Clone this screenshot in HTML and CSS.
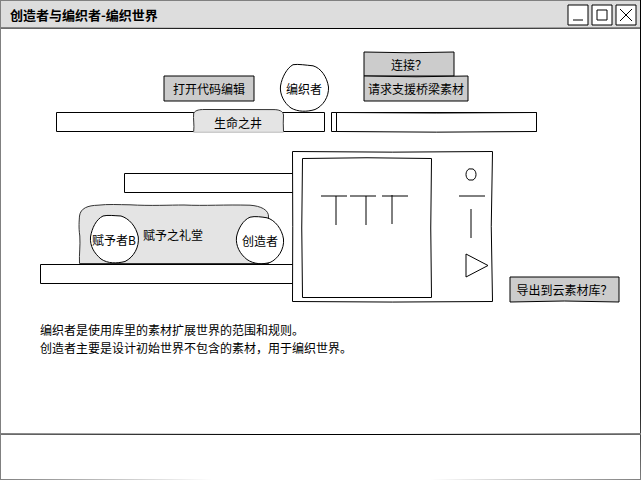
FILE: index.html
```html
<!DOCTYPE html>
<html lang="zh-CN">
<head>
<meta charset="utf-8">
<title>创造者与编织者-编织世界</title>
<link rel="stylesheet" href="styles.css">
</head>
<body>
<div class="window">
  <header class="titlebar">
    <h1 class="title">创造者与编织者-编织世界</h1>
    <div class="controls">
      <button class="control" type="button" aria-label="最小化">
        <svg viewBox="0 0 22 22"><path d="M1 1H21V21H1Z"/><path d="M6 16H16"/></svg>
      </button>
      <button class="control" type="button" aria-label="最大化">
        <svg viewBox="0 0 22 22"><path d="M1 1H21V21H1Z"/><path d="M6 6H16V16H6Z"/></svg>
      </button>
      <button class="control" type="button" aria-label="关闭">
        <svg viewBox="0 0 22 22"><path d="M1 1H21V21H1Z"/><path d="M5 5L17 17M17 5L5 17"/></svg>
      </button>
    </div>
  </header>

  <main class="stage">
    <svg class="scene" viewBox="0 29 641 404" aria-hidden="true">
      <!-- platforms -->
      <path class="paper" d="M56.500 112.500H324.500V131.500H56.500Z"/>
      <path class="paper" d="M331.500 112.500H536.500V131.500H331.500Z"/>
      <path class="paper" d="M336.500 112.500Q436 113.500 536.500 112.500V131.500Q436 132.800 336.500 131.500Z"/>
      <path class="paper" d="M124.500 173.500H300V192.500H124.500Z"/>
      <path class="paper" d="M40.500 264.500H300V283.500H40.500Z"/>
      <!-- well and hall -->
      <path class="base" d="M193.500 132H283.500"/>
      <path class="stone" d="M193.700 131.500C194.500 125 193 119 193.700 113C196 109.800 200 109.600 204 109.500L273 109.600C279 109.500 283 111 283.500 115Q283 123 283.500 131.500"/>
      <path class="stone" d="M79.500 263.500C79 254 80.500 246 79.800 236C78.500 227 79.200 221 79.500 216C80.500 208 88 205.500 98 205.200C108 204 118 204.700 130 204.800C150 206 170 205 184 205C205 206 225 204.500 250 205.200C261 206 269 210 268.500 217V263.500Z"/>
      <!-- characters -->
      <path class="paper" d="M293 64.700C298 63.800 306 65.200 313 65.800C321 68 327 77 328.500 87C329 97 323 106 315 109.500C307 112 298 112 291 108C284 103 279.500 94 280.500 86C282 77 287 68 293 64.700Z"/>
      <path class="paper" d="M103 216C108 214.800 114 215.700 121 216C129 218.500 136 226 138.300 237C139.300 247 134 257 125 261.500C117 263.500 108 263.800 101 259C94 253 89.800 246 90.500 237C92 228 96 219.500 103 216Z"/>
      <path class="paper" d="M250 217.200C255 215.900 262 217 267 217.800C275 220 282 229 283.500 239C284.500 249 278 259 270 262.500C262 264.500 254 264.300 247 259.500C240 254 235.500 246 236.500 237C238 229 243 220 250 217.200Z"/>
      <!-- action panels -->
      <path class="panel" d="M164 76H254V101H164Z"/>
      <path class="panel" d="M364 52Q409 53.500 454 52V76H364Z"/>
      <path class="panel" d="M364 76Q416 77.500 468 76V101H364Z"/>
      <path class="panel" d="M510 277H619V302Q564 300 510 302Z"/>
      <!-- device -->
      <path class="paper" d="M292.500 151.500Q392 152.800 492.500 151.500Q490 226 492.500 301.500Q392 302.600 292.500 301.500Q293 226 292.500 151.500Z"/>
      <path class="paper" d="M302.500 158.500Q367 157 431.500 158.500Q430 228 431.500 297.500H302.500Q301 228 302.500 158.500Z"/>
      <path class="mark" d="M321 196H347M336 196V225M350 196H376M366 196V225M382 196H408M392 195V224"/>
      <path class="mark" d="M459 196H485M471 209V238"/>
      <path class="paper" d="M469 168.900L473 169C477 171 477 178 473 180L469 180C465 178 465 171 469 168.900Z"/>
      <path class="paper" d="M466 254L488 265.500L466 277Z"/>
    </svg>

    <button class="action edit" type="button">打开代码编辑</button>
    <button class="action connect" type="button">连接？</button>
    <button class="action request" type="button">请求支援桥梁素材</button>
    <button class="action export" type="button">导出到云素材库？</button>

    <span class="label weaver">编织者</span>
    <span class="label well">生命之井</span>
    <span class="label giver">赋予者B</span>
    <span class="label hall">赋予之礼堂</span>
    <span class="label creator">创造者</span>

    <p class="note">编织者是使用库里的素材扩展世界的范围和规则。<br>创造者主要是设计初始世界不包含的素材，用于编织世界。</p>
  </main>

  <footer class="statusbar"></footer>
</div>
</body>
</html>
```
FILE: styles.css
```css
* {
  box-sizing: border-box;
}

body {
  margin: 0;
  background: #fff;
  color: #000;
  font: 12px/18px "Noto Sans CJK SC", sans-serif;
}

.window {
  display: flex;
  flex-direction: column;
  min-height: 100vh;
  border-left: 1px solid #808080;
  background:
    linear-gradient(#000, #222 85%, #808080) right / 1px 100% no-repeat,
    linear-gradient(90deg, #808080, #fff 33%, #fff 67%, #808080) bottom / 100% 1px no-repeat,
    #fff;
}

.titlebar,
.statusbar {
  --fade: linear-gradient(90deg, #808080, transparent 40%, transparent 60%, #808080);
  --line: linear-gradient(90deg, #707070, #000 40%, #000 60%, #707070);
}

.titlebar {
  display: flex;
  align-items: center;
  justify-content: space-between;
  height: 29px;
  margin-right: 1px;
  padding: 1px 3px 2px 9px;
  border-top: 1px solid #808080;
  background:
    var(--line) bottom / 100% 1px no-repeat,
    var(--fade) 0 calc(100% - 1px) / 100% 1px no-repeat,
    #ddd;
}

.title {
  margin: 0;
  font-size: 13px;
  line-height: 18px;
  font-weight: 700;
}

.controls {
  display: flex;
  gap: 2px;
}

.control {
  width: 22px;
  height: 22px;
  padding: 0;
  border: 0;
  background: none;
}

.control svg {
  display: block;
  fill: #fff;
  stroke: #000;
}

.stage {
  position: relative;
  flex: 1;
  margin-left: -1px;
}

.scene {
  position: absolute;
  top: 0;
  left: 0;
  width: 641px;
  height: 404px;
}

.scene path {
  stroke: #000;
  stroke-width: 1;
}

.scene .paper {
  fill: #fff;
}

.scene .stone {
  fill: #e4e4e4;
  stroke: #333;
}

.scene .panel {
  fill: #ccc;
}

.scene .mark {
  fill: none;
}

.scene .base {
  stroke: #ccc;
  stroke-width: 2;
}

.action {
  position: absolute;
  height: 26px;
  padding: 0;
  border: 0;
  background: none;
  color: inherit;
  font: inherit;
}

.edit {
  top: 47px;
  left: 163px;
  width: 92px;
}

.connect {
  top: 23px;
  left: 363px;
  width: 92px;
}

.request {
  top: 47px;
  left: 363px;
  width: 106px;
}

.export {
  top: 248px;
  left: 509px;
  width: 111px;
}

.label {
  position: absolute;
  white-space: nowrap;
}

.weaver {
  top: 51px;
  left: 286px;
}

.well {
  top: 85px;
  left: 214px;
}

.giver {
  top: 202px;
  left: 92px;
}

.hall {
  top: 197px;
  left: 143px;
}

.creator {
  top: 203px;
  left: 242px;
}

.note {
  position: absolute;
  top: 292px;
  left: 40px;
  margin: 0;
}

.statusbar {
  height: 47px;
  background:
    var(--line) 0 1px / 100% 1px no-repeat,
    var(--fade) 0 0 / 100% 1px no-repeat;
}
```
